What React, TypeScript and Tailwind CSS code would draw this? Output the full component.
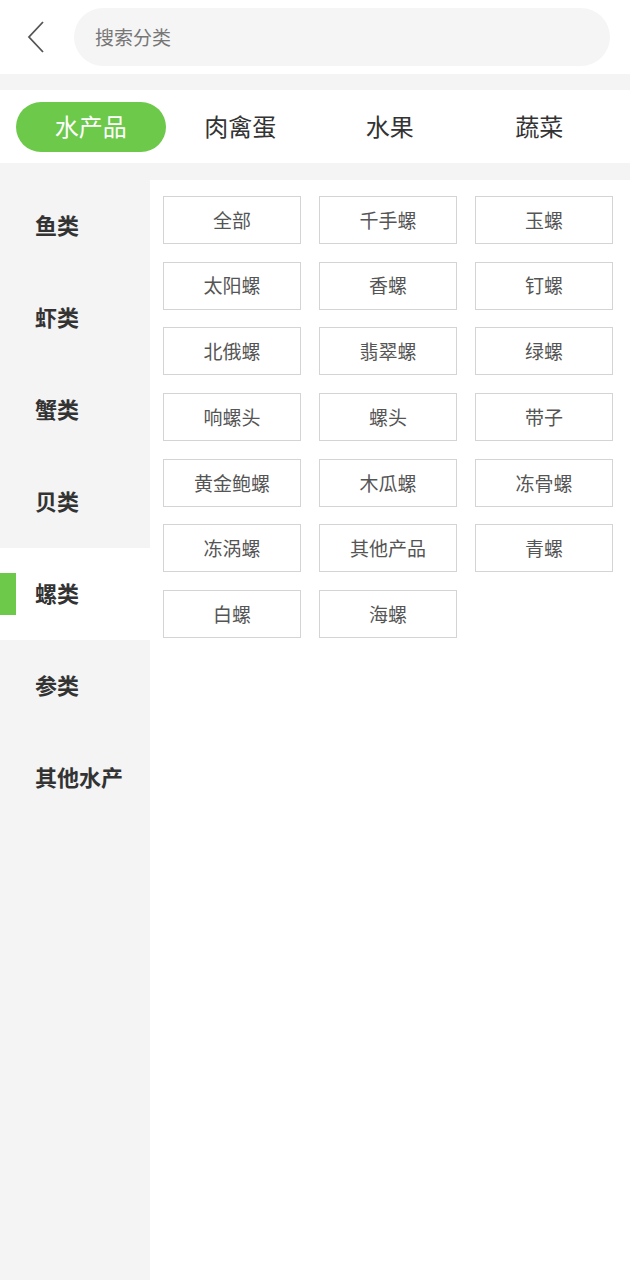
import React, { useState } from 'react'

const topTabs = ['水产品', '肉禽蛋', '水果', '蔬菜']
const sideItems = ['鱼类', '虾类', '蟹类', '贝类', '螺类', '参类', '其他水产']
const products = [
  '全部', '千手螺', '玉螺',
  '太阳螺', '香螺', '钉螺',
  '北俄螺', '翡翠螺', '绿螺',
  '响螺头', '螺头', '带子',
  '黄金鲍螺', '木瓜螺', '冻骨螺',
  '冻涡螺', '其他产品', '青螺',
  '白螺', '海螺',
]

export default function App() {
  const [tab, setTab] = useState(0)
  const [side, setSide] = useState(4)

  return (
    <div className="h-screen flex flex-col bg-[#f4f4f4] font-['Noto_Sans_CJK_SC','Noto_Sans',sans-serif]">
      {/* Search header */}
      <header className="h-[74px] bg-white flex items-center pl-[24px] pr-[20px] gap-[26px] shrink-0">
        <button className="w-[24px] h-[34px] flex items-center justify-center">
          <svg width="20" height="32" viewBox="0 0 20 32" fill="none">
            <polyline points="17,1 3,16 17,31" stroke="#555" strokeWidth="1.8" strokeLinejoin="miter" />
          </svg>
        </button>
        <div className="flex-1 h-[58px] rounded-full bg-[#f5f5f5] flex items-center px-[21px]">
          <span className="text-[19px] text-[#777]">搜索分类</span>
        </div>
      </header>

      {/* Top category tabs */}
      <nav className="mt-[16px] h-[73px] bg-white grid grid-cols-4 items-center px-[16px] shrink-0">
        {topTabs.map((t, i) => (
          <button
            key={t}
            onClick={() => setTab(i)}
            className={`h-[50px] rounded-full text-[24px] flex items-center justify-center pb-[1px] ${
              tab === i ? 'bg-[#6cc94a] text-white' : 'text-[#333]'
            }`}
          >
            {t}
          </button>
        ))}
      </nav>

      <div className="mt-[17px] flex flex-1 min-h-0">
        {/* Sidebar */}
        <aside className="w-[150px] bg-[#f4f4f4] shrink-0">
          {sideItems.map((s, i) => (
            <button
              key={s}
              onClick={() => setSide(i)}
              className={`relative w-full h-[92px] flex items-center pl-[35px] pb-[4px] text-[22px] font-bold text-[#333] ${
                side === i ? 'bg-white' : ''
              }`}
            >
              {side === i && <span className="absolute left-0 top-[25px] w-[16px] h-[42px] bg-[#6cc94a]" />}
              {s}
            </button>
          ))}
        </aside>

        {/* Product grid */}
        <main className="flex-1 bg-white pl-[13px] pr-[17px] pt-[16px]">
          <div className="grid grid-cols-3 gap-x-[18px] gap-y-[17.7px]">
            {products.map((p) => (
              <button
                key={p}
                className="h-[48px] border border-[#d4d4d4] flex items-center justify-center text-[19px] text-[#555]"
              >
                {p}
              </button>
            ))}
          </div>
        </main>
      </div>
    </div>
  )
}
